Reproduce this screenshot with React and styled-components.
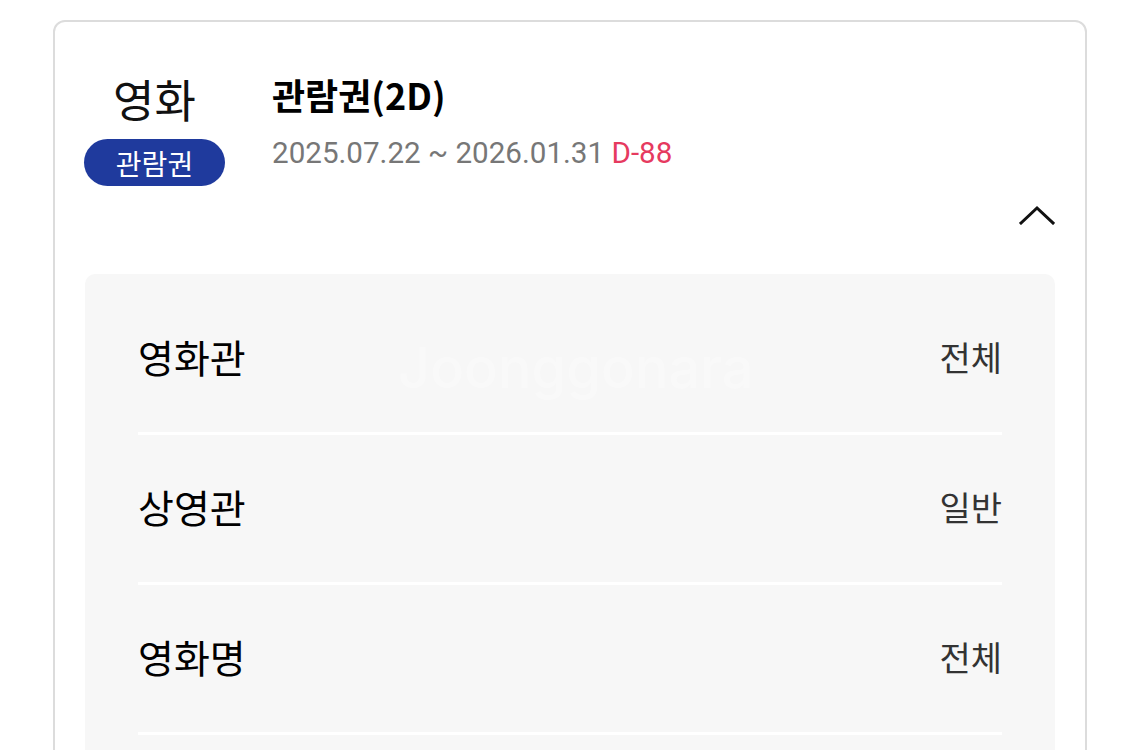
import React from "react";
import styled, { createGlobalStyle } from "styled-components";

const GlobalStyle = createGlobalStyle`
  body {
    margin: 0;
    background: #fff;
    font-family: "Noto Sans CJK KR", "Noto Sans", sans-serif;
    color: #000;
  }
`;

const rows = [
  { label: "영화관", value: "전체" },
  { label: "상영관", value: "일반" },
  { label: "영화명", value: "전체" },
];

const App = () => {
  return (
    <>
      <GlobalStyle />
      <Card>
        <Header>
          <CategoryCol>
            <Category>영화</Category>
            <Badge>관람권</Badge>
          </CategoryCol>
          <InfoCol>
            <Title>관람권(2D)</Title>
            <Period>
              2025.07.22 ~ 2026.01.31 <DDay>D-88</DDay>
            </Period>
          </InfoCol>
        </Header>
        <ToggleRow>
          <svg width="36" height="20" viewBox="0 0 36 20" fill="none">
            <path
              d="M2 18 L18 3 L34 18"
              stroke="#111"
              strokeWidth="3"
              strokeLinecap="square"
            />
          </svg>
        </ToggleRow>
        <Panel>
          <Watermark>Joonggonara</Watermark>
          {rows.map((r) => (
            <Row key={r.label}>
              <Label>{r.label}</Label>
              <Value>{r.value}</Value>
            </Row>
          ))}
        </Panel>
      </Card>
    </>
  );
};

export default App;

const Card = styled.div`
  margin: 20px 0 0 53px;
  width: 1034px;
  box-sizing: border-box;
  border: 2px solid #dcdcdc;
  border-radius: 12px;
  padding: 0 30px 40px;
`;

const Header = styled.div`
  display: flex;
  align-items: flex-start;
  padding-top: 48px;
  margin-left: -1px;
`;

const CategoryCol = styled.div`
  width: 141px;
  display: flex;
  flex-direction: column;
  align-items: center;
  margin-top: 3px;
`;

const Category = styled.div`
  font-size: 45px;
  line-height: 52px;
  color: #111;
`;

const Badge = styled.div`
  margin-top: 14px;
  width: 141px;
  height: 47px;
  border-radius: 24px;
  background: #1f3a9d;
  color: #fff;
  font-size: 28px;
  display: flex;
  align-items: center;
  justify-content: center;
`;

const InfoCol = styled.div`
  margin-left: 47px;
  display: flex;
  flex-direction: column;
`;

const Title = styled.div`
  font-size: 36px;
  font-weight: 700;
  line-height: 48px;
  color: #000;
`;

const Period = styled.div`
  margin-top: 17px;
  font-family: Roboto, "Noto Sans", sans-serif;
  font-size: 29.6px;
  line-height: 36px;
  color: #777;
`;

const DDay = styled.span`
  color: #e63a5f;
`;

const ToggleRow = styled.div`
  display: flex;
  justify-content: flex-end;
  margin-top: 19px;
  height: 20px;
`;

const Panel = styled.div`
  position: relative;
  margin-top: 49px;
  background: #f7f7f7;
  border-radius: 10px;
  padding: 11px 53px 150px;
`;

const Watermark = styled.div`
  position: absolute;
  left: 313px;
  top: 60px;
  font-family: Inter, "Noto Sans", sans-serif;
  font-size: 56px;
  font-weight: 500;
  color: rgba(255, 255, 255, 0.3);
  pointer-events: none;
`;

const Row = styled.div`
  box-sizing: border-box;
  height: 150px;
  padding-bottom: 5px;
  display: flex;
  align-items: center;
  justify-content: space-between;
  border-bottom: 3px solid #fff;
`;

const Label = styled.div`
  font-size: 39px;
  color: #000;
`;

const Value = styled.div`
  font-size: 34px;
  color: #333;
`;
